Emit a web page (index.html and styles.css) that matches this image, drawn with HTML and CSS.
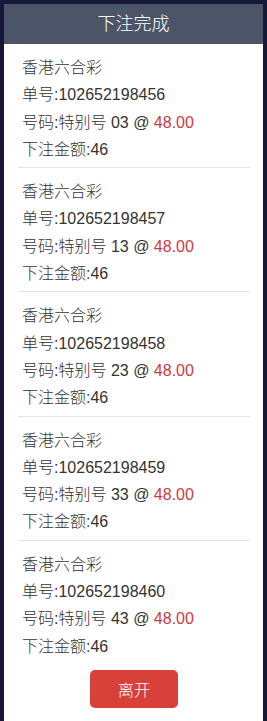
FILE: index.html
```html
<!DOCTYPE html>
<html lang="zh">
<head>
<meta charset="utf-8">
<link rel="stylesheet" href="styles.css">
</head>
<body>
<div class="modal">
  <div class="modal-header">下注完成</div>
  <div class="modal-body">
    <div class="bet">
      <div class="line">香港六合彩</div>
      <div class="line">单号:102652198456</div>
      <div class="line">号码:特别号 03 @ <span class="odds">48.00</span></div>
      <div class="line">下注金额:46</div>
    </div>
    <div class="bet">
      <div class="line">香港六合彩</div>
      <div class="line">单号:102652198457</div>
      <div class="line">号码:特别号 13 @ <span class="odds">48.00</span></div>
      <div class="line">下注金额:46</div>
    </div>
    <div class="bet">
      <div class="line">香港六合彩</div>
      <div class="line">单号:102652198458</div>
      <div class="line">号码:特别号 23 @ <span class="odds">48.00</span></div>
      <div class="line">下注金额:46</div>
    </div>
    <div class="bet">
      <div class="line">香港六合彩</div>
      <div class="line">单号:102652198459</div>
      <div class="line">号码:特别号 33 @ <span class="odds">48.00</span></div>
      <div class="line">下注金额:46</div>
    </div>
    <div class="bet last">
      <div class="line">香港六合彩</div>
      <div class="line">单号:102652198460</div>
      <div class="line">号码:特别号 43 @ <span class="odds">48.00</span></div>
      <div class="line">下注金额:46</div>
    </div>
    <div class="actions">
      <button class="btn-leave">离开</button>
    </div>
  </div>
</div>
</body>
</html>
```
FILE: styles.css
```css
html, body {
  margin: 0;
  padding: 0;
  height: 100%;
}
body {
  background: #17173a;
  padding: 4px 4px 0 4px;
  box-sizing: border-box;
  font-family: "Liberation Sans", "Noto Sans CJK SC", sans-serif;
  overflow: hidden;
}
.modal {
  background: #ffffff;
  min-height: 100%;
  display: flex;
  flex-direction: column;
}
.modal-header {
  background: #4b5567;
  color: #ffffff;
  height: 40px;
  line-height: 40px;
  text-align: center;
  font-size: 18px;
  font-weight: 300;
}
.modal-body {
  padding: 0 13px 0 14px;
}
.bet {
  padding: 10px 0 4px 4px;
  border-bottom: 1px solid #e4e4e4;
}
.bet.last {
  border-bottom: none;
}
.line {
  font-size: 16px;
  line-height: 27.3px;
  color: #333333;
  font-weight: 300;
}
.odds {
  color: #cf3a3c;
}
.actions {
  display: flex;
  justify-content: center;
  padding-top: 6px;
}
.btn-leave {
  width: 88px;
  height: 38px;
  border: none;
  border-radius: 5px;
  background: #d8413a;
  color: #ffffff;
  font-family: "Liberation Sans", "Noto Sans CJK SC", sans-serif;
  font-size: 16px;
  font-weight: 300;
  padding: 0;
}
```
